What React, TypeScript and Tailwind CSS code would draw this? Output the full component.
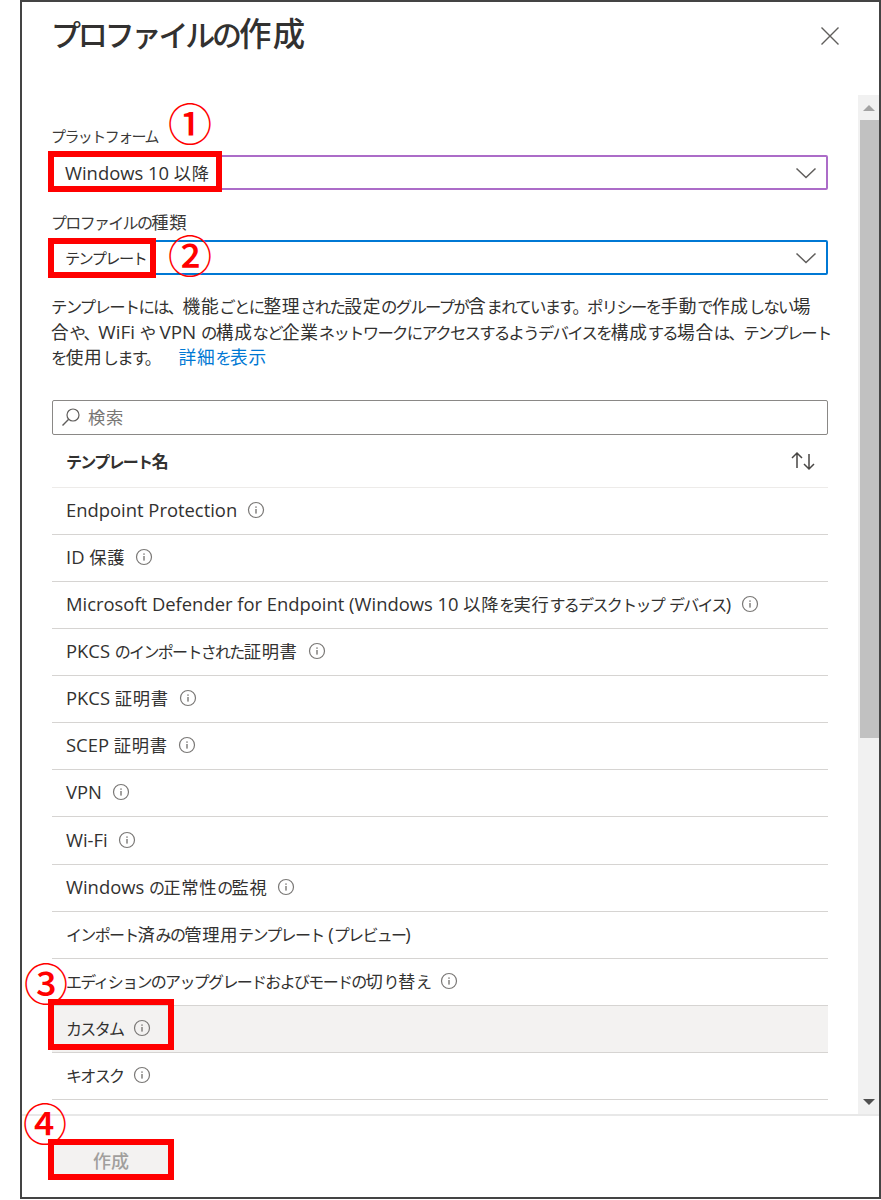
import React from "react";

function T({ children }: { children: string }) {
  const parts = children.match(/[\u3040-\u30ff\u3001\u3002]+|[\u4e00-\u9fff]+|[^\u3040-\u30ff\u3001\u3002\u4e00-\u9fff]+/g) ?? [];
  return (
    <>
      {parts.map((p, i) => {
        const c = p.charCodeAt(0);
        if (c >= 0x4e00 && c <= 0x9fff) return <span key={i} className="leading-none text-[1.08em] tracking-[0.04em]">{p}</span>;
        if (c >= 0x3001 && c <= 0x30ff) return <span key={i} className="leading-none tracking-[-0.105em]">{p}</span>;
        return <span key={i} className="leading-none text-[1.15em] font-['Open_Sans',sans-serif] whitespace-pre">{p}</span>;
      })}
    </>
  );
}

function Info() {
  return (
    <svg width="18" height="18" viewBox="0 0 18 18" fill="none" className="shrink-0 ml-[10px]">
      <circle cx="9" cy="9" r="7.5" stroke="#7a7876" strokeWidth="1.2" />
      <rect x="8.3" y="8" width="1.4" height="4.6" fill="#7a7876" />
      <rect x="8.3" y="5.4" width="1.4" height="1.4" fill="#7a7876" />
    </svg>
  );
}

function Chevron() {
  return (
    <svg width="22" height="14" viewBox="0 0 22 14" fill="none">
      <path d="M1.5 2.5 L11 11.5 L20.5 2.5" stroke="#605e5c" strokeWidth="1.5" />
    </svg>
  );
}

const rows: { t: string; info: boolean; sel?: boolean }[] = [
  { t: "Endpoint Protection", info: true },
  { t: "ID 保護", info: true },
  { t: "Microsoft Defender for Endpoint (Windows 10 以降を実行するデスクトップ デバイス)", info: true },
  { t: "PKCS のインポートされた証明書", info: true },
  { t: "PKCS 証明書", info: true },
  { t: "SCEP 証明書", info: true },
  { t: "VPN", info: true },
  { t: "Wi-Fi", info: true },
  { t: "Windows の正常性の監視", info: true },
  { t: "インポート済みの管理用テンプレート (プレビュー)", info: false },
  { t: "エディションのアップグレードおよびモードの切り替え", info: true },
  { t: "カスタム", info: true, sel: true },
  { t: "キオスク", info: true },
  { t: "デバイス ファームウェア構成インターフェイス", info: true },
];

function RedBox({ className }: { className: string }) {
  return <div className={"absolute border-[6px] border-[#ff0000] " + className} />;
}

function Num({ className, children }: { className: string; children: React.ReactNode }) {
  return (
    <div className={"absolute w-[48px] h-[48px] flex items-center justify-center text-[#ff0000] text-[44px] leading-none font-medium font-['Noto_Sans_CJK_JP',sans-serif] " + className}>
      {children}
    </div>
  );
}

export default function App() {
  return (
    <div className="relative w-[881px] h-[1200px] bg-white pl-[20px] pb-[1px] overflow-hidden font-['Noto_Sans_CJK_JP','Noto_Sans',sans-serif] text-[#323130]">
      <div className="h-full border-2 border-[#444444] flex flex-col">
        <div className="h-[93px] shrink-0 flex items-start justify-between pl-[29px] pr-[40px]">
          <h1 className="text-[30px] leading-[40px] mt-[11px] font-medium whitespace-nowrap"><T>プロファイルの作成</T></h1>
          <svg width="18" height="18" viewBox="0 0 18 18" fill="none" className="mt-[25px]">
            <path d="M0.5 0.5 L17.5 17.5 M17.5 0.5 L0.5 17.5" stroke="#605e5c" strokeWidth="1.4" />
          </svg>
        </div>

        <div className="flex-1 min-h-0 flex">
          <div className="flex-1 min-w-0 overflow-hidden pl-[30px] pr-[30px] pt-[29px]">
            <div className="text-[15px] leading-[24px] text-[#3b3a39] h-[31px] -ml-[1px] whitespace-nowrap"><T>プラットフォーム</T></div>
            <div className="h-[35px] border-2 border-[#ac6cc8] rounded-[2px] flex items-center justify-between pl-[11px] pr-[9px] text-[16px]">
              <span className="whitespace-nowrap"><T>Windows 10 以降</T></span>
              <Chevron />
            </div>
            <div className="text-[16px] leading-[24px] text-[#3b3a39] mt-[20px] h-[30px] -ml-[1px] whitespace-nowrap"><T>プロファイルの種類</T></div>
            <div className="h-[35px] border-2 border-[#0078d4] rounded-[2px] flex items-center justify-between pl-[11px] pr-[9px] text-[15.2px]">
              <span className="whitespace-nowrap"><T>テンプレート</T></span>
              <Chevron />
            </div>
            <p className="mt-[19px] text-[16.4px] leading-[25.5px] whitespace-nowrap -ml-[1px]">
              <T>テンプレートには、機能ごとに整理された設定のグループが含まれています。ポリシーを手動で作成しない場</T>
              <br />
              <T>合や、WiFi や VPN の構成など企業ネットワークにアクセスするようデバイスを構成する場合は、テンプレート</T>
              <br />
              <T>を使用します。</T><span className="text-[#0078d4] ml-[19px]"><T>詳細を表示</T></span>
            </p>
            <div className="mt-[29px] h-[35px] border border-[#8a8886] rounded-[2px] flex items-center pl-[8px] text-[16px] text-[#797775]">
              <svg width="20" height="20" viewBox="0 0 20 20" fill="none" className="mr-[7px]">
                <circle cx="12" cy="8" r="6" stroke="#605e5c" strokeWidth="1.2" />
                <path d="M7.7 12.3 L1.5 18.5" stroke="#605e5c" strokeWidth="1.4" />
              </svg>
              <T>検索</T>
            </div>
            <div className="h-[53px] border-b border-[#edebe9] flex items-center justify-between pl-[14px] pr-[12px] text-[16px] font-semibold">
              <span className="whitespace-nowrap"><T>テンプレート名</T></span>
              <svg width="26" height="22" viewBox="0 0 26 22" fill="none">
                <path d="M7 18 V3 M2 8 L7 3 L12 8" stroke="#484644" strokeWidth="1.5" />
                <path d="M19 4 V19 M14 14 L19 19 L24 14" stroke="#484644" strokeWidth="1.5" />
              </svg>
            </div>
            {rows.map((r) => (
              <div
                key={r.t}
                className={
                  "h-[47.15px] border-b border-[#d6d4d2] flex items-center pl-[14px] pb-[2px] text-[16px] whitespace-nowrap " +
                  (r.sel ? "bg-[#f3f2f1]" : "")
                }
              >
                <span><T>{r.t}</T></span>
                {r.info && <Info />}
              </div>
            ))}
          </div>

          <div className="w-[21px] shrink-0 bg-[#f1f1f1] flex flex-col">
            <div className="h-[25px] flex items-center justify-center">
              <div className="w-0 h-0 border-x-[6px] border-x-transparent border-b-[6px] border-b-[#a3a3a3]" />
            </div>
            <div className="h-[618px] ml-[2px] bg-[#c1c1c1]" />
            <div className="flex-1 flex items-end justify-center pb-[9px]">
              <div className="w-0 h-0 border-x-[6px] border-x-transparent border-t-[6px] border-t-[#505050]" />
            </div>
          </div>
        </div>

        <div className="h-[83px] shrink-0 border-t-2 border-[#e8e8e8] pl-[30px] pt-[27px]">
          <button className="w-[118px] h-[34px] bg-[#f3f2f1] text-[#a19f9d] text-[18px] font-medium">作成</button>
        </div>
      </div>

      <RedBox className="left-[48px] top-[151px] w-[174px] h-[41px]" />
      <RedBox className="left-[48px] top-[238px] w-[108px] h-[40px]" />
      <RedBox className="left-[48px] top-[999px] w-[126px] h-[51px]" />
      <RedBox className="left-[48px] top-[1139px] w-[126px] h-[41px]" />
      <Num className="left-[166px] top-[98px]">①</Num>
      <Num className="left-[166px] top-[230px]">②</Num>
      <Num className="left-[22px] top-[958px]">③</Num>
      <Num className="left-[21px] top-[1098px]">④</Num>
    </div>
  );
}
